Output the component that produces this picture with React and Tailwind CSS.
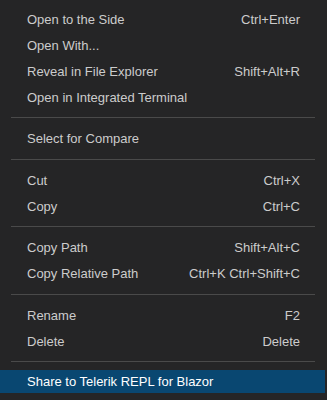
import React from "react";

const groups = [
  [
    ["Open to the Side", "Ctrl+Enter"],
    ["Open With...", ""],
    ["Reveal in File Explorer", "Shift+Alt+R"],
    ["Open in Integrated Terminal", ""],
  ],
  [["Select for Compare", ""]],
  [
    ["Cut", "Ctrl+X"],
    ["Copy", "Ctrl+C"],
  ],
  [
    ["Copy Path", "Shift+Alt+C"],
    ["Copy Relative Path", "Ctrl+K Ctrl+Shift+C"],
  ],
  [
    ["Rename", "F2"],
    ["Delete", "Delete"],
  ],
];

function Row({ label, shortcut }) {
  return (
    <div className="flex h-[26px] items-center justify-between pl-[27px] pr-[27px]">
      <span>{label}</span>
      <span>{shortcut}</span>
    </div>
  );
}

function Sep() {
  return (
    <div className="flex h-[15.5px] items-center pl-[11px] pr-[12px]">
      <div className="h-px w-full bg-[#4a4a4a]" />
    </div>
  );
}

export default function App() {
  return (
    <div
      className="h-[400px] w-[327px] overflow-hidden bg-[#252526] pt-[6px] text-[13px] leading-none text-[#cccccc]"
      style={{ fontFamily: '"Liberation Sans", Arial, sans-serif' }}
    >
      {groups.map((g, i) => (
        <React.Fragment key={i}>
          {g.map(([l, s]) => (
            <Row key={l} label={l} shortcut={s} />
          ))}
          <Sep />
        </React.Fragment>
      ))}
      <div className="mr-[2px] flex h-[23px] items-center bg-[#094771] pl-[27px] pt-[1px] text-white">
        <span>Share to Telerik REPL for Blazor</span>
      </div>
    </div>
  );
}
